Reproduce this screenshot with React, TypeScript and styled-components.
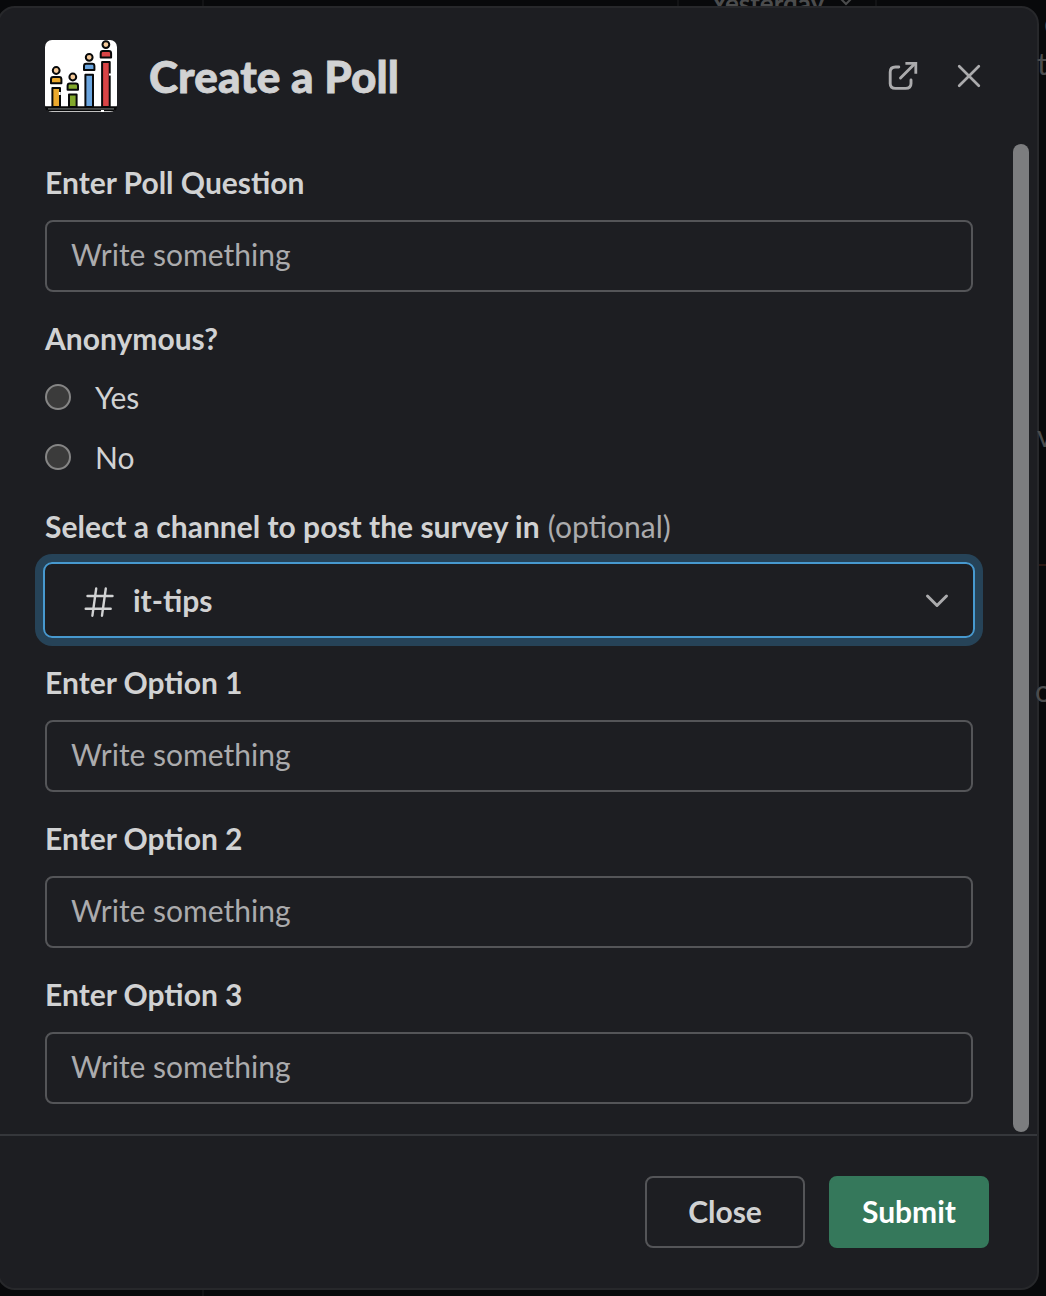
import React from "react";
import styled, { createGlobalStyle } from "styled-components";

const GlobalStyle = createGlobalStyle`
  * { box-sizing: border-box; }
  html, body { margin: 0; padding: 0; background: #08090b; overflow: hidden; }
  body { font-family: Lato, "Liberation Sans", sans-serif; font-size: 30px; color: #d1d2d3; }
`;

const Screen = styled.div`
  position: relative;
  width: 1046px;
  height: 1296px;
  padding-top: 6px;
  overflow: hidden;
  background: #08090b;
`;

const BehindText = styled.span<{ $x: number; $y: number; $size?: number; $bold?: boolean }>`
  position: absolute;
  left: ${(p) => p.$x}px;
  top: ${(p) => p.$y}px;
  font-size: ${(p) => p.$size ?? 30}px;
  font-weight: ${(p) => (p.$bold ? 700 : 400)};
  line-height: 36px;
  color: #4b4c4d;
  white-space: nowrap;
`;

const BehindLine = styled.i<{ $x: number; $y: number; $w: number; $h: number; $color?: string }>`
  position: absolute;
  left: ${(p) => p.$x}px;
  top: ${(p) => p.$y}px;
  width: ${(p) => p.$w}px;
  height: ${(p) => p.$h}px;
  background: ${(p) => p.$color ?? "#121315"};
`;

const BehindChevron = styled.svg`
  position: absolute;
  left: 838px;
  top: -4px;
`;

const Modal = styled.section`
  position: relative;
  display: flex;
  flex-direction: column;
  width: 1042px;
  height: 1284px;
  margin-left: -3px;
  border: 2px solid #27282b;
  border-radius: 18px;
  background: #1d1e22;
  overflow: hidden;
`;

const Header = styled.header`
  display: flex;
  align-items: center;
  height: 136px;
  padding: 0 50px 0 46px;
`;

const AppIcon = styled.svg`
  display: block;
  flex: none;
`;

const Title = styled.h1`
  flex: 1;
  margin: 0 0 0 32px;
  font-size: 44px;
  font-weight: 900;
  line-height: 56px;
  letter-spacing: 0.12px;
  -webkit-text-stroke: 0.8px currentColor;
`;

const HeaderActions = styled.div`
  display: flex;
  gap: 30px;
  color: #ababad;
`;

const IconButton = styled.button`
  display: flex;
  width: 36px;
  height: 36px;
  padding: 0;
  border: 0;
  background: none;
  color: inherit;
`;

const Body = styled.div`
  display: flex;
  justify-content: space-between;
  height: 990px;
  padding: 0 8px 2px 46px;
`;

const Form = styled.div`
  display: flex;
  flex-direction: column;
  gap: 24px;
  width: 928px;
  padding-top: 16px;
`;

const Scrollbar = styled.div`
  width: 16px;
  border-radius: 8px;
  background: #7c7d7f;
`;

const Field = styled.div`
  display: flex;
  flex-direction: column;
`;

const Label = styled.div`
  height: 60px;
  font-weight: 700;
  line-height: 44px;
  white-space: nowrap;
`;

const Optional = styled.span`
  margin-left: 1px;
  font-weight: 400;
  color: #ababad;
`;

const TextBox = styled.div`
  height: 72px;
  padding: 0 24px;
  border: 2px solid #545558;
  border-radius: 8px;
  line-height: 64px;
  color: #ababad;
`;

const RadioList = styled.div`
  display: flex;
  flex-direction: column;
  margin: -9px 0 -7px;
`;

const RadioRow = styled.label`
  display: flex;
  align-items: center;
  gap: 24px;
  height: 60px;
`;

const RadioDot = styled.i`
  width: 26px;
  height: 26px;
  border: 2px solid #858585;
  border-radius: 50%;
  background: #3b3b3b;
`;

const Select = styled.div`
  display: flex;
  align-items: center;
  height: 76px;
  margin: -2px -2px;
  padding: 2px 23px 0 36px;
  border: 2px solid #4799cf;
  border-radius: 9px;
  box-shadow: 0 0 0 8px #264358;
  font-weight: 700;
`;

const SelectValue = styled.span`
  flex: 1;
  margin-left: 16px;
  padding-bottom: 2px;
`;

const Footer = styled.footer`
  display: flex;
  flex: 1;
  align-items: flex-start;
  justify-content: flex-end;
  gap: 24px;
  padding: 40px 48px 0 0;
  border-top: 2px solid #35373b;
`;

const Button = styled.button<{ $primary?: boolean }>`
  width: 160px;
  height: 72px;
  padding: 0 0 2px;
  border: 2px solid ${(p) => (p.$primary ? "#35785b" : "#545558")};
  border-radius: 8px;
  background: ${(p) => (p.$primary ? "#35785b" : "transparent")};
  color: ${(p) => (p.$primary ? "#ffffff" : "#d1d2d3")};
  font: 700 30px Lato, "Liberation Sans", sans-serif;
`;

const people = [
  { x: 11.2, head: 30.5, color: "#eba92d" },
  { x: 27.8, head: 37, color: "#82a82c" },
  { x: 44.2, head: 17.3, color: "#6aa5df" },
  { x: 60.9, head: 4.6, color: "#d94446" },
];

const PollLogo = () => (
  <AppIcon width="72" height="72" viewBox="0 0 72 72">
    <rect width="72" height="72" rx="7" fill="#fff" />
    {people.map((p) => (
      <g key={p.color} stroke="#08090a" strokeWidth="2" strokeLinejoin="round">
        <circle cx={p.x} cy={p.head} r="3.4" fill="#f5ca9a" />
        <path
          d={`M${p.x - 5.2} ${p.head + 12.8}v-4q0-2.4 2.2-2.4h6q2.2 0 2.2 2.4v4z`}
          fill={p.color}
        />
        <path d={`M${p.x - 3.8} 67V${p.head + 17.5}h7.6V67z`} fill={p.color} />
      </g>
    ))}
    <path d="M0 66.2h72v1.8q-1 3.3-5 3.3H5q-4 0-5-3.3z" fill="#08090a" />
    <path d="M3 68.8h66" stroke="#4a4d4c" strokeWidth="1.8" />
    <path d="M56 71h3M65 33.5v2M14.8 52v3" stroke="#fff" strokeWidth="2" />
  </AppIcon>
);

const TextField = ({ label }: { label: string }) => (
  <Field>
    <Label>{label}</Label>
    <TextBox role="textbox">Write something</TextBox>
  </Field>
);

export default function App() {
  return (
    <>
      <GlobalStyle />
      <Screen>
        <BehindLine $x={202} $y={0} $w={2} $h={1296} />
        <BehindLine $x={677} $y={0} $w={2} $h={8} />
        <BehindLine $x={875} $y={0} $w={2} $h={8} />
        <BehindLine $x={1036} $y={564} $w={10} $h={2} $color="#2b1713" />
        <BehindText $x={711} $y={-15} $size={26} $bold>Yesterday</BehindText>
        <BehindChevron width="16" height="10" viewBox="0 0 16 10" fill="none" stroke="#4b4c4d" strokeWidth="2">
          <path d="M2 2l6 6 6-6" />
        </BehindChevron>
        <Modal>
          <Header>
            <PollLogo />
            <Title>Create a Poll</Title>
            <HeaderActions>
              <IconButton aria-label="Open in new window">
                <svg width="36" height="36" viewBox="0 0 36 36" fill="none" stroke="currentColor" strokeWidth="2.9" strokeLinecap="round" strokeLinejoin="round">
                  <path d="M13.8 9H10.5Q5.2 9 5.2 14V25.5Q5.2 30.4 10.5 30.4H20.5Q26 30.4 26 25.5V22" />
                  <path d="M15.5 20L30 5.5" />
                  <path d="M21.8 5.4h9v9" strokeLinecap="square" strokeLinejoin="miter" strokeWidth="2.8" />
                </svg>
              </IconButton>
              <IconButton aria-label="Close dialog">
                <svg width="36" height="36" viewBox="0 0 36 36" fill="none" stroke="currentColor" strokeWidth="2.7" strokeLinecap="round">
                  <path d="M8.2 8.2l19.6 19.6M27.8 8.2L8.2 27.8" />
                </svg>
              </IconButton>
            </HeaderActions>
          </Header>
          <Body>
            <Form>
              <TextField label="Enter Poll Question" />
              <Field>
                <Label>Anonymous?</Label>
                <RadioList>
                  {["Yes", "No"].map((option) => (
                    <RadioRow key={option}>
                      <RadioDot />
                      {option}
                    </RadioRow>
                  ))}
                </RadioList>
              </Field>
              <Field>
                <Label>
                  Select a channel to post the survey in <Optional>(optional)</Optional>
                </Label>
                <Select>
                  <svg width="36" height="36" viewBox="0 0 36 36" fill="none" stroke="#d1d2d3" strokeWidth="2.4" strokeLinecap="round">
                    <path d="M6.5 13h25M4.7 25.7h25M15.2 5.5L11.4 32.7M24.8 5.5L21 32.7" />
                  </svg>
                  <SelectValue>it-tips</SelectValue>
                  <svg width="26" height="18" viewBox="0 0 26 18" fill="none" stroke="#ababad" strokeWidth="3" strokeLinecap="round" strokeLinejoin="round">
                    <path d="M3.5 4L13 13.5l9.5-9.5" />
                  </svg>
                </Select>
              </Field>
              <TextField label="Enter Option 1" />
              <TextField label="Enter Option 2" />
              <TextField label="Enter Option 3" />
            </Form>
            <Scrollbar />
          </Body>
          <Footer>
            <Button>Close</Button>
            <Button $primary>Submit</Button>
          </Footer>
        </Modal>
        <BehindText $x={1037} $y={45}>t</BehindText>
        <BehindText $x={1044} $y={4}>c</BehindText>
        <BehindText $x={1037} $y={417}>v</BehindText>
        <BehindText $x={1035} $y={672}>o</BehindText>
      </Screen>
    </>
  );
}
